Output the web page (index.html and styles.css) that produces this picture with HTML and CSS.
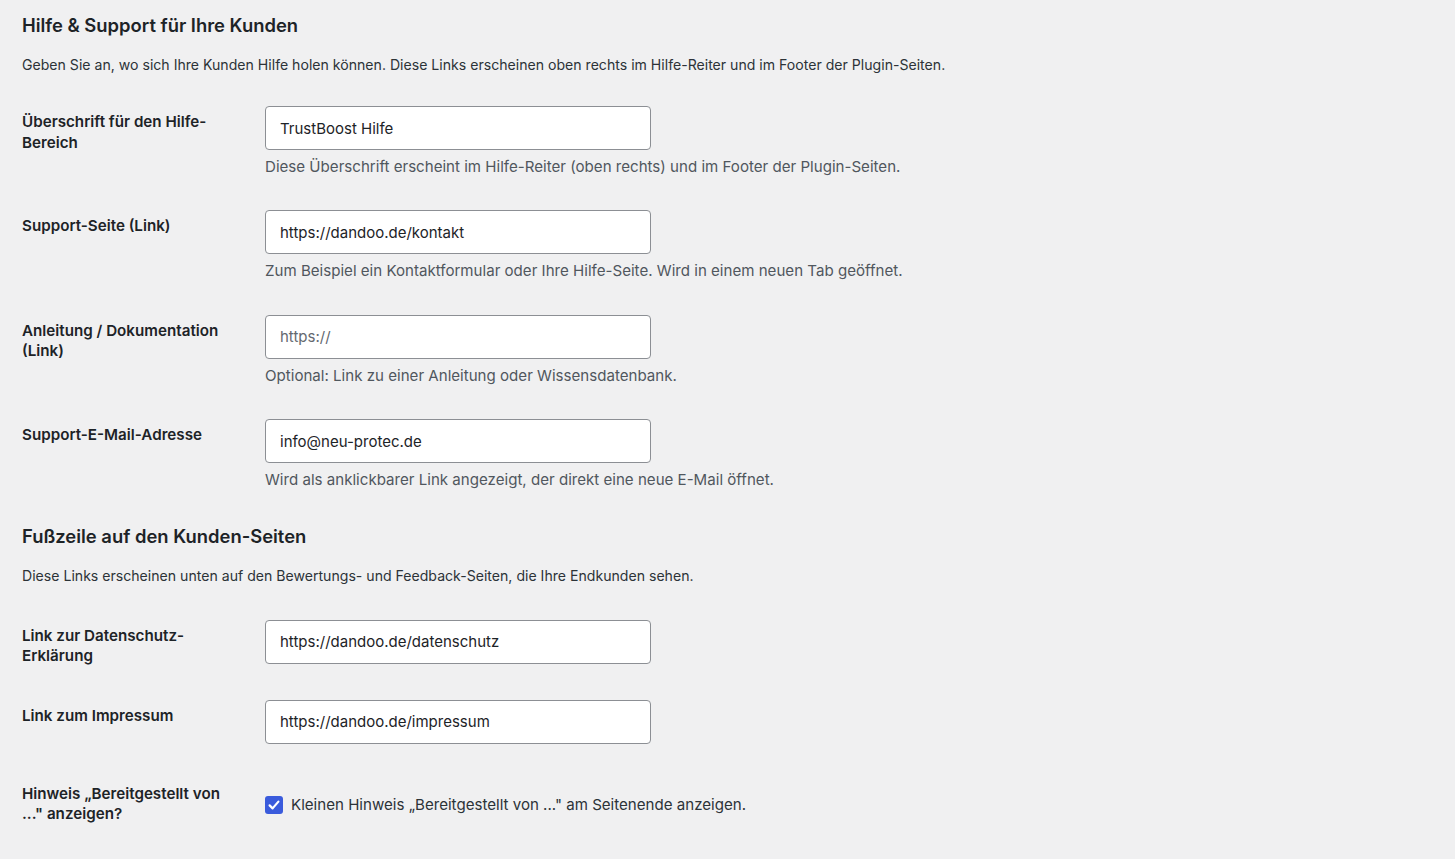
FILE: index.html
```html
<!DOCTYPE html>
<html lang="de">
<head>
<meta charset="utf-8">
<title>Hilfe &amp; Support</title>
<link rel="stylesheet" href="styles.css">
</head>
<body>
<div class="wrap">
  <h2 class="section-title">Hilfe &amp; Support für Ihre Kunden</h2>
  <p class="section-desc">Geben Sie an, wo sich Ihre Kunden Hilfe holen können. Diese Links erscheinen oben rechts im Hilfe-Reiter und im Footer der Plugin-Seiten.</p>
  <table class="form-table">
    <tr>
      <th><label class="th-label" for="f1">Überschrift für den Hilfe-Bereich</label></th>
      <td><input id="f1" class="text-input" type="text" value="TrustBoost Hilfe"><p class="description">Diese Überschrift erscheint im Hilfe-Reiter (oben rechts) und im Footer der Plugin-Seiten.</p></td>
    </tr>
    <tr>
      <th><label class="th-label" for="f2">Support-Seite (Link)</label></th>
      <td><input id="f2" class="text-input" type="text" value="https://dandoo.de/kontakt"><p class="description">Zum Beispiel ein Kontaktformular oder Ihre Hilfe-Seite. Wird in einem neuen Tab geöffnet.</p></td>
    </tr>
    <tr>
      <th><label class="th-label" for="f3">Anleitung / Dokumentation (Link)</label></th>
      <td><input id="f3" class="text-input" type="text" placeholder="https://"><p class="description">Optional: Link zu einer Anleitung oder Wissensdatenbank.</p></td>
    </tr>
    <tr>
      <th><label class="th-label" for="f4">Support-E-Mail-Adresse</label></th>
      <td><input id="f4" class="text-input" type="text" value="info@neu-protec.de"><p class="description">Wird als anklickbarer Link angezeigt, der direkt eine neue E-Mail öffnet.</p></td>
    </tr>
  </table>

  <h2 class="section-title second">Fußzeile auf den Kunden-Seiten</h2>
  <p class="section-desc">Diese Links erscheinen unten auf den Bewertungs- und Feedback-Seiten, die Ihre Endkunden sehen.</p>
  <table class="form-table compact">
    <tr>
      <th><label class="th-label" for="f5">Link zur Datenschutz-Erklärung</label></th>
      <td><input id="f5" class="text-input" type="text" value="https://dandoo.de/datenschutz"></td>
    </tr>
    <tr>
      <th><label class="th-label" for="f6">Link zum Impressum</label></th>
      <td><input id="f6" class="text-input" type="text" value="https://dandoo.de/impressum"></td>
    </tr>
    <tr>
      <th><span class="th-label">Hinweis „Bereitgestellt von ..." anzeigen?</span></th>
      <td class="check-cell"><label class="check-label"><span class="checkbox"><svg viewBox="0 0 18 18" width="18" height="18"><path d="M4.6 9.4 L7.6 12.4 L13.4 5.6" fill="none" stroke="#fff" stroke-width="2.2" stroke-linecap="round" stroke-linejoin="round"/></svg></span>Kleinen Hinweis „Bereitgestellt von ..." am Seitenende anzeigen.</label></td>
    </tr>
  </table>
</div>
</body>
</html>
```
FILE: styles.css
```css
html, body {
  margin: 0;
  padding: 0;
  background: #f0f0f1;
}
body {
  font-family: Inter, "Noto Sans", "Liberation Sans", sans-serif;
  color: #1d2327;
  font-size: 15px;
}
.wrap {
  padding: 0 22px;
}
.section-title {
  font-size: 18.4px;
  font-weight: 600;
  line-height: 25px;
  margin: 0;
  padding-top: 13px;
  color: #1d2327;
}
.section-title.second {
  padding-top: 17px;
}
.section-desc {
  margin: 16px 0 0;
  font-size: 14.1px;
  line-height: 21px;
  color: #2c3338;
}
.form-table {
  border-collapse: collapse;
  margin-top: 14px;
}
.form-table.compact {
  margin-top: 17px;
}
.form-table th {
  width: 243px;
  box-sizing: border-box;
  text-align: left;
  vertical-align: top;
  font-weight: 600;
  font-size: 15.2px;
  line-height: 20.5px;
  padding: 23px 0 0 0;
  color: #1d2327;
}
.th-label {
  display: block;
  width: 215px;
}
.form-table td {
  vertical-align: top;
  padding: 17px 0 15px 0;
}
.form-table tr {
  height: 104.4px;
}
.form-table.compact tr {
  height: 80px;
}
.form-table.compact td {
  padding: 17px 0 0;
}
.text-input {
  display: block;
  box-sizing: border-box;
  width: 386px;
  height: 44px;
  margin: 0;
  padding: 0 14px;
  border: 1px solid #8c8f94;
  border-radius: 4px;
  background: #fff;
  font-family: Inter, "Noto Sans", "Liberation Sans", sans-serif;
  font-size: 15px;
  line-height: 20px;
  color: #1d2327;
  outline: none;
}
.text-input::placeholder {
  color: #646970;
}
.description {
  margin: 6px 0 0;
  font-size: 15.1px;
  line-height: 21px;
  color: #50575e;
}
.form-table.compact tr:last-child th {
  padding-top: 21px;
}
.check-cell {
  padding-top: 32px !important;
}
.check-label {
  display: flex;
  align-items: center;
  gap: 8px;
  font-size: 15.1px;
  line-height: 20px;
  color: #2c3338;
}
.checkbox {
  width: 18px;
  height: 18px;
  border-radius: 3px;
  background: #3a5bdc;
  display: inline-flex;
  flex-shrink: 0;
}
```
